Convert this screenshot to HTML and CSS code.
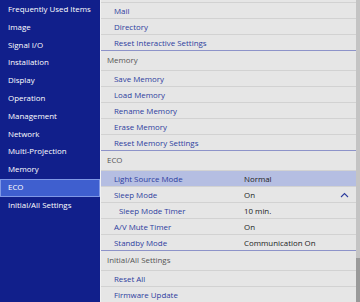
FILE: index.html
```html
<!DOCTYPE html>
<html lang="en">
<head>
  <meta charset="UTF-8">
  <title>Settings</title>
  <link rel="stylesheet" href="styles.css">
</head>
<body>
  <div class="screen">
    <nav class="menu">
      <div class="menu-item">Frequently Used Items</div>
      <div class="menu-item">Image</div>
      <div class="menu-item">Signal I/O</div>
      <div class="menu-item">Installation</div>
      <div class="menu-item">Display</div>
      <div class="menu-item">Operation</div>
      <div class="menu-item">Management</div>
      <div class="menu-item">Network</div>
      <div class="menu-item">Multi-Projection</div>
      <div class="menu-item">Memory</div>
      <div class="menu-item active">ECO</div>
      <div class="menu-item">Initial/All Settings</div>
    </nav>

    <main class="panel">
      <div class="list">
        <div class="stub"></div>
        <div class="row">Mail</div>
        <div class="row">Directory</div>
        <div class="row last">Reset Interactive Settings</div>

        <div class="group">Memory</div>
        <div class="row">Save Memory</div>
        <div class="row">Load Memory</div>
        <div class="row">Rename Memory</div>
        <div class="row">Erase Memory</div>
        <div class="row last">Reset Memory Settings</div>

        <div class="group">ECO</div>
        <div class="row selected"><span class="label">Light Source Mode</span><span class="value">Normal</span></div>
        <div class="row">
          <span class="label">Sleep Mode</span><span class="value">On</span>
          <svg class="chevron" width="9" height="6" viewBox="0 0 9 6"><path d="M1 5 L4.5 1.5 L8 5" fill="none" stroke="#2d3d9e" stroke-width="1.1"/></svg>
        </div>
        <div class="row"><span class="label sub">Sleep Mode Timer</span><span class="value">10 min.</span></div>
        <div class="row"><span class="label">A/V Mute Timer</span><span class="value">On</span></div>
        <div class="row last"><span class="label">Standby Mode</span><span class="value">Communication On</span></div>

        <div class="group">Initial/All Settings</div>
        <div class="row">Reset All</div>
        <div class="row">Firmware Update</div>
      </div>
      <div class="scrollbar"><div class="thumb"></div></div>
    </main>
  </div>
</body>
</html>
```

FILE: styles.css
```css
body {
  margin: 0;
  font-family: "Open Sans", sans-serif;
  font-size: 7.9px;
  background: #e6e6e6;
  overflow: hidden;
}

.screen {
  display: flex;
  width: 360px;
  height: 302px;
}

.menu {
  width: 100px;
  background: #111f8b;
  padding-top: 1px;
  flex-shrink: 0;
}

.menu-item {
  height: 17.8px;
  line-height: 17.8px;
  padding-left: 8px;
  color: #ffffff;
  white-space: nowrap;
  box-sizing: border-box;
}

.menu-item.active {
  background: #3f5fcf;
  border: 1px solid #8098e6;
  line-height: 15.8px;
  padding-left: 7px;
}

.panel {
  flex: 1;
  display: flex;
  border-left: 1px solid #f2f2f2;
  background: #e6e6e6;
}

.list {
  flex: 1;
}

.stub {
  height: 2px;
  border-bottom: 1px solid #d2d2d2;
}

.row {
  display: flex;
  align-items: center;
  height: 15px;
  border-bottom: 1px solid #d2d2d2;
  padding-left: 13px;
  color: #2d3d9e;
  white-space: nowrap;
}

.row.last {
  border-bottom-color: #8d93c9;
}

.row.selected {
  background: #b5bee2;
}

.label {
  width: 130px;
}

.label.sub {
  padding-left: 5px;
  width: 125px;
}

.value {
  color: #222222;
  flex: 1;
}

.chevron {
  margin-right: 7px;
}

.group {
  height: 19px;
  line-height: 19px;
  border-bottom: 1px solid #d2d2d2;
  padding-left: 6px;
  color: #555555;
}

.scrollbar {
  width: 4px;
  background: #c4c4c4;
  display: flex;
  flex-direction: column;
  justify-content: flex-end;
}

.thumb {
  height: 44px;
  background: #9a9a9a;
}
```
